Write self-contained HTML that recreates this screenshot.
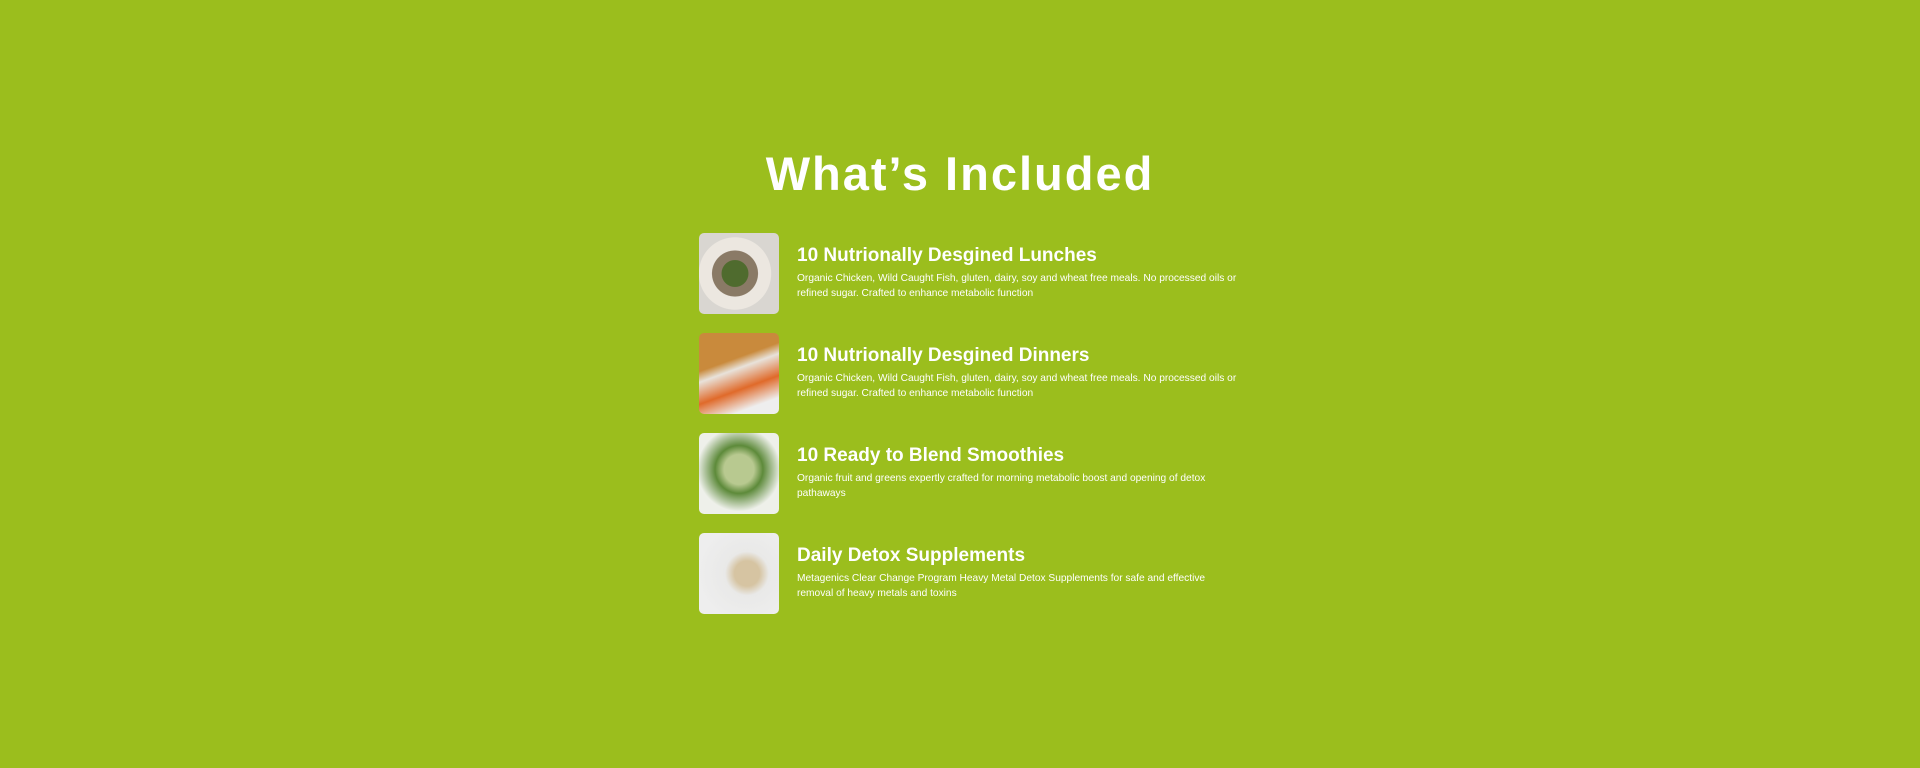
<!DOCTYPE html>
<html><head><meta charset="utf-8"><style>
body{margin:0;width:1920px;height:768px;background:#9bbe1d;font-family:"Liberation Sans",sans-serif;color:#fff;position:relative;overflow:hidden}
h1{position:absolute;left:0;width:1920px;top:142px;margin:0;text-align:center;font-size:47px;font-weight:bold;letter-spacing:2px;line-height:64px}
.row{position:absolute;left:699px;height:81px}
.img{position:absolute;left:0;top:0;width:80px;height:81px;border-radius:5px;overflow:hidden}
.t{position:absolute;left:98px;top:10px;width:460px}
.t h2{margin:0;font-size:19px;font-weight:bold;line-height:26px;white-space:nowrap}
.t p{margin:3px 0 0;font-size:10.2px;line-height:14.5px;white-space:nowrap}
</style></head><body>
<h1>What’s Included</h1>
<div class="row" style="top:233px"><div class="img" style="background:radial-gradient(circle at 45% 50%,#4f6b2e 0 22%,#8a7a66 23% 38%,#ece7e0 39% 60%,#d9d6d1 61%)"></div><div class="t"><h2>10 Nutrionally Desgined Lunches</h2><p>Organic Chicken, Wild Caught Fish, gluten, dairy, soy and wheat free meals. No processed oils or<br>refined sugar. Crafted to enhance metabolic function</p></div></div>
<div class="row" style="top:333px"><div class="img" style="background:linear-gradient(160deg,#c98a3c 0 35%,#e8e2da 45%,#e06a2a 65%,#eee 85%)"></div><div class="t"><h2>10 Nutrionally Desgined Dinners</h2><p>Organic Chicken, Wild Caught Fish, gluten, dairy, soy and wheat free meals. No processed oils or<br>refined sugar. Crafted to enhance metabolic function</p></div></div>
<div class="row" style="top:433px"><div class="img" style="background:radial-gradient(circle at 50% 45%,#b8c990 0 25%,#5d8a3a 40%,#eef0ea 70%)"></div><div class="t"><h2>10 Ready to Blend Smoothies</h2><p>Organic fruit and greens expertly crafted for morning metabolic boost and opening of detox<br>pathaways</p></div></div>
<div class="row" style="top:533px"><div class="img" style="background:radial-gradient(circle at 60% 50%,#d6c4a2 0 20%,#e9e9e8 35%,#eeeeee 80%)"></div><div class="t"><h2>Daily Detox Supplements</h2><p>Metagenics Clear Change Program Heavy Metal Detox Supplements for safe and effective<br>removal of heavy metals and toxins</p></div></div>
</body></html>
